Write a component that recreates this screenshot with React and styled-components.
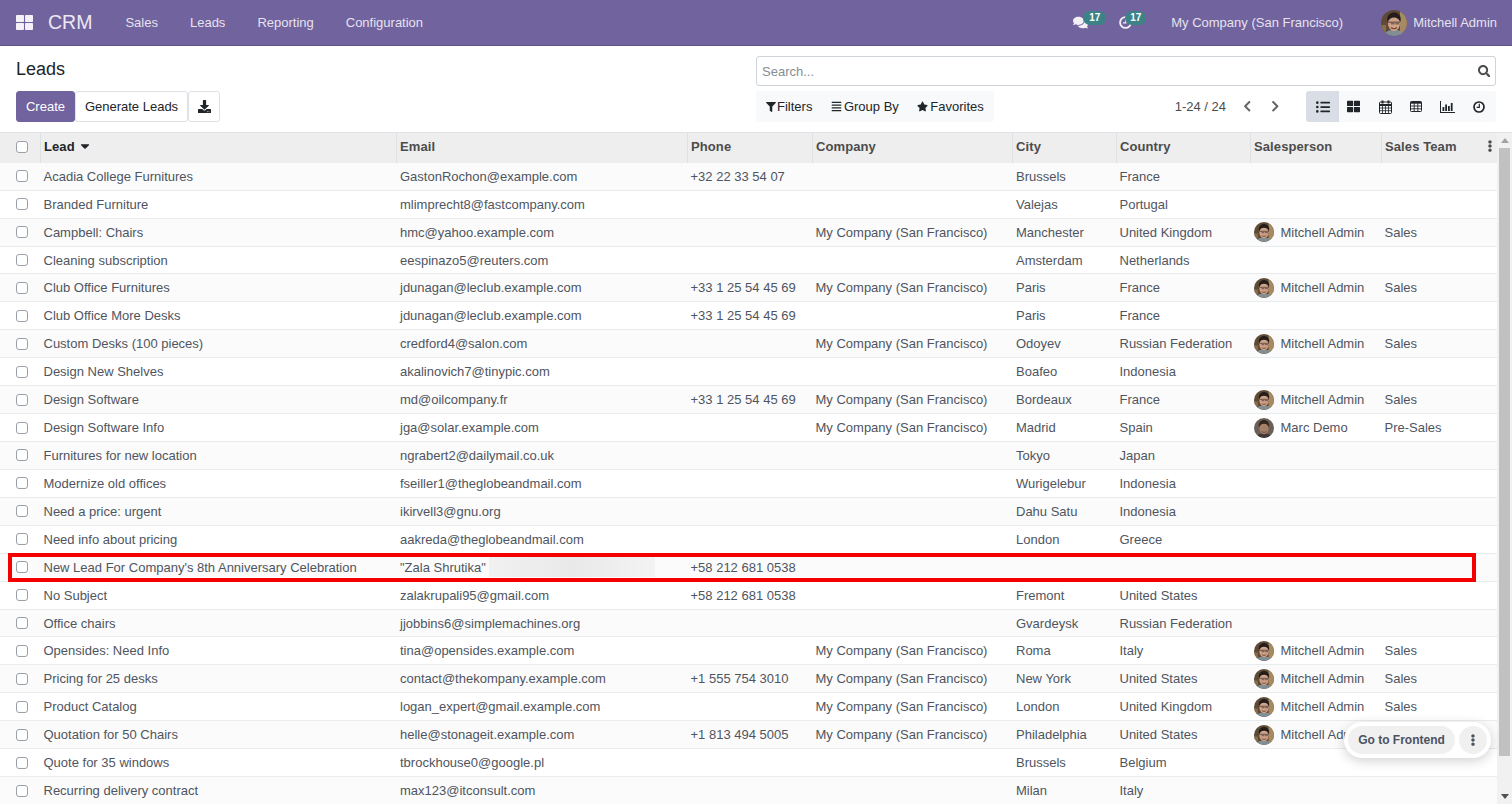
import React from 'react';
import styled, { createGlobalStyle } from 'styled-components';
import {
  FaThLarge, FaComments, FaSearch, FaDownload, FaFilter, FaAlignJustify, FaStar,
  FaChevronLeft, FaChevronRight, FaListUl, FaCaretDown, FaEllipsisV,
} from 'react-icons/fa';

const GlobalStyle = createGlobalStyle`
  html, body { margin: 0; padding: 0; height: 100%; overflow: hidden; }
  body {
    font-family: "Liberation Sans", Arial, sans-serif;
    font-size: 13px;
    color: #4c4c4c;
    background: #fff;
  }
  * { box-sizing: border-box; }
`;

const Page = styled.div`
  display: flex;
  flex-direction: column;
  height: 100vh;
  position: relative;
`;

const Navbar = styled.header`
  display: flex;
  align-items: center;
  flex: 0 0 46px;
  padding: 0 15px 0 16px;
  background: #71639e;
  border-bottom: 1px solid #5f5385;
  color: #fff;
`;

const AppsIcon = styled(FaThLarge)`
  font-size: 17px;
  margin-right: 15px;
  color: #f4f2f8;
`;

const Brand = styled.div`
  font-size: 19.5px;
  color: #ece9f2;
  margin-right: 17px;
`;

const NavItem = styled.a`
  padding: 0 16px;
  font-size: 13px;
  color: #e6e2ee;
`;

const Spacer = styled.div`
  flex: 1;
`;

const Systray = styled.div`
  position: relative;
  display: flex;
  align-items: center;
  width: ${(p) => p.$w}px;
  height: 30px;
  color: #f2f0f6;
  font-size: ${(p) => p.$size}px;
`;

const Counter = styled.span`
  position: absolute;
  left: ${(p) => p.$left}px;
  top: 3px;
  height: 14px;
  padding: 0 ${(p) => p.$pad}px;
  line-height: 13px;
  border-radius: 7px;
  background: #3d8286;
  color: #fff;
  font-size: 10px;
  font-weight: 700;
`;

const CompanyName = styled.span`
  margin-left: 25px;
  margin-right: 38px;
  color: #e6e2ee;
`;

const UserName = styled.span`
  margin-left: 6px;
  color: #e6e2ee;
`;

const ControlPanel = styled.section`
  display: grid;
  grid-template-columns: 1fr 740px;
  column-gap: 16px;
  flex: 0 0 87px;
  padding: 10px 16px 0;
  border-bottom: 1px solid #dee2e6;
`;

const LeftPanel = styled.div`
  display: flex;
  flex-direction: column;
  justify-content: space-between;
  height: 66px;
`;

const Title = styled.h1`
  margin: 2px 0 0;
  font-size: 18px;
  line-height: 22px;
  font-weight: 400;
  color: #212529;
`;

const ButtonRow = styled.div`
  display: flex;
`;

const Button = styled.button`
  display: flex;
  align-items: center;
  justify-content: center;
  height: 31px;
  width: ${(p) => p.$w}px;
  padding: 0;
  font: inherit;
  color: ${(p) => (p.$primary ? '#fff' : '#212529')};
  background: ${(p) => (p.$primary ? '#71639e' : '#fff')};
  border: 1px solid ${(p) => (p.$primary ? '#71639e' : '#dee2e6')};
  border-radius: 3px;
  svg { font-size: 13px; }
`;

const RightPanel = styled.div`
  display: flex;
  flex-direction: column;
  gap: 5px;
`;

const SearchBox = styled.div`
  display: flex;
  align-items: center;
  justify-content: space-between;
  height: 30px;
  padding: 0 5px;
  border: 1px solid #ced4da;
  border-radius: 3px;
  color: #868e96;
  svg { font-size: 12.5px; color: #4c4c4c; }
`;

const ToolsRow = styled.div`
  display: flex;
  align-items: center;
  height: 31px;
`;

const FilterBar = styled.div`
  display: flex;
  align-items: center;
  height: 31px;
  width: 238px;
  padding-left: 10px;
  gap: 18.5px;
  background: #f8f9fa;
  border-radius: 3px;
  color: #212529;
`;

const FilterItem = styled.span`
  display: flex;
  align-items: center;
  gap: ${(p) => p.$gap}px;
  svg { font-size: ${(p) => p.$icon}px; }
`;

const Pager = styled.div`
  display: flex;
  align-items: center;
  margin-left: auto;
  color: #4c4c4c;
  svg { font-size: 12.5px; color: #666; margin-left: 15px; }
`;

const ViewSwitcher = styled.div`
  display: flex;
  width: 190px;
  height: 31px;
  margin-left: 25px;
  background: #f8f9fa;
  border-radius: 3px;
`;

const ViewButton = styled.div`
  display: flex;
  align-items: center;
  justify-content: center;
  width: ${(p) => (p.$active ? 33 : 31.4)}px;
  margin-right: ${(p) => (p.$active ? -1 : 0)}px;
  font-size: ${(p) => p.$size || 14}px;
  color: #212529;
  background: ${(p) => (p.$active ? '#d9dde5' : 'transparent')};
  border-radius: 3px 0 0 3px;
`;

const ListArea = styled.div`
  display: flex;
  flex: 1;
  min-height: 0;
`;

const ListScroller = styled.div`
  position: relative;
  flex: 1;
  min-width: 0;
  overflow: hidden;
`;

const ScrollTrack = styled.div`
  display: flex;
  flex-direction: column;
  align-items: center;
  flex: 0 0 15px;
  background: #f1f1f1;
`;

const ArrowBox = styled.div`
  display: flex;
  align-items: center;
  justify-content: center;
  flex: 0 0 15px;
  width: 15px;
  &::before {
    content: '';
    border-left: 4.5px solid transparent;
    border-right: 4.5px solid transparent;
    ${(p) => (p.$down ? 'border-top: 5px solid #505050;' : 'border-bottom: 5px solid #a3a3a3;')}
  }
`;

const ScrollThumb = styled.div`
  flex: 0 0 608px;
  width: 11px;
  background: #c1c1c1;
`;

const ScrollGap = styled.div`
  flex: 1;
`;

const Table = styled.table`
  width: 100%;
  table-layout: fixed;
  border-collapse: separate;
  border-spacing: 0;
`;

const HeadCell = styled.th`
  position: relative;
  height: 29.8px;
  padding: 0 4px 3px 3px;
  text-align: left;
  font-size: 13px;
  font-weight: 700;
  letter-spacing: 0.1px;
  color: ${(p) => (p.$dark ? '#212529' : '#4c4c4c')};
  background: #eeeeef;
  border-left: ${(p) => (p.$first ? '0' : '1px solid #dee2e6')};
  svg { vertical-align: -2px; margin-left: 0; font-size: 14px; }
`;

const HeadCheck = styled(HeadCell)`
  padding-left: 16px;
  padding-bottom: 2px;
`;

const ColumnMenu = styled(FaEllipsisV)`
  position: absolute;
  right: 1px;
  top: 7px;
  color: #4c4c4c;
  && { font-size: 12px; }
`;

const Row = styled.tr`
  background: ${(p) => (p.$odd ? '#fbfbfb' : '#fff')};
`;

const Cell = styled.td`
  position: relative;
  height: 27.93px;
  padding: 0 4px 0 ${(p) => (p.$tight ? 3.5 : 4)}px;
  border-bottom: 1px solid #e9ecef;
  color: #4f5560;
  white-space: nowrap;
  overflow: hidden;
`;

const CheckCell = styled(Cell)`
  padding-left: 16px;
`;

const CheckBox = styled.span`
  display: block;
  width: 12px;
  height: 12px;
  background: #fff;
  border: 1px solid #9aa0a8;
  border-radius: 3px;
`;

const Person = styled.span`
  display: flex;
  align-items: center;
  gap: 6.5px;
`;

const BlurredMail = styled.span`
  position: absolute;
  left: 93px;
  top: 3px;
  width: 166px;
  height: 20px;
  background: linear-gradient(90deg, #f1f1f2, #e9e9ea 50%, #f3f3f4);
`;

const Highlight = styled.div`
  position: absolute;
  left: 8px;
  top: 420px;
  width: 1468px;
  height: 29px;
  border: 4px solid #f40000;
  pointer-events: none;
`;

const FrontendWidget = styled.div`
  position: absolute;
  left: 1344px;
  top: 722px;
  display: flex;
  align-items: center;
  gap: 4px;
  padding: 4px;
  background: #fff;
  border-radius: 18px;
  box-shadow: 0 3px 12px rgba(0, 0, 0, 0.18);
`;

const FrontendButton = styled.div`
  display: flex;
  align-items: center;
  justify-content: center;
  width: 107px;
  height: 28px;
  border-radius: 14px;
  background: #f0f0f0;
  color: #4b5260;
  font-size: 12px;
  font-weight: 700;
`;

const MoreButton = styled.div`
  display: flex;
  align-items: center;
  justify-content: center;
  width: 28px;
  height: 28px;
  border-radius: 50%;
  background: #f0f0f0;
  color: #4b5260;
  font-size: 12px;
`;

// the font awesome 4 look of these is not in the icon package, so drawn here
const CalendarIcon = () => (
  <svg width="13" height="14" viewBox="0 0 13 14" fill="none" stroke="currentColor">
    <rect x="0.5" y="2" width="12" height="11.5" rx="1" />
    <path d="M0.5 5h12" strokeWidth="2" />
    <path d="M3.5 0.5v3M9.5 0.5v3" strokeWidth="2" />
    <path d="M0.5 8h12M0.5 10.7h12M3.5 5v8M6.5 5v8M9.5 5v8" strokeWidth="0.8" />
  </svg>
);

const TableIcon = () => (
  <svg width="12" height="11" viewBox="0 0 12 11" fill="none" stroke="currentColor">
    <rect x="0.5" y="0.5" width="11" height="10" rx="0.8" />
    <path d="M0.5 1.8h11" strokeWidth="1.8" />
    <path d="M0.5 5h11M0.5 7.8h11M4.2 2v8M7.8 2v8" strokeWidth="0.9" />
  </svg>
);

const BarsIcon = () => (
  <svg width="15" height="12" viewBox="0 0 15 12" fill="currentColor">
    <path d="M0 0h1v11h14v1H0z" />
    <rect x="2.5" y="6" width="1.8" height="4" />
    <rect x="5.2" y="3.5" width="1.8" height="6.5" />
    <rect x="8" y="5" width="1.8" height="5" />
    <rect x="10.8" y="2" width="1.8" height="8" />
  </svg>
);

const ClockIcon = ({ size = 12 }) => (
  <svg width={size} height={size} viewBox="0 0 12 12" fill="none" stroke="currentColor">
    <circle cx="6" cy="6" r="5" strokeWidth="1.7" />
    <path d="M6.3 2.8v3.6H3.6" strokeWidth="1.2" />
  </svg>
);

// small portrait drawn by hand, the pictures are not available here
const Avatar = ({ size = 20, demo }) => (
  <svg width={size} height={size} viewBox="0 0 26 26" style={{ flex: 'none', display: 'block' }}>
    <defs>
      <clipPath id="face-round"><circle cx="13" cy="13" r="13" /></clipPath>
    </defs>
    <g clipPath="url(#face-round)">
      <rect width="26" height="26" fill={demo ? '#6b5f58' : '#5e4a36'} />
      {!demo && <rect x="19" width="7" height="26" fill="#a58a62" />}
      {!demo && <rect y="15" width="5" height="11" fill="#8a6e4a" />}
      <path d="M3 26c1-5 5-6 10-6s9 1 10 6z" fill={demo ? '#3f3835' : '#7f8f94'} />
      <ellipse cx="13" cy="13.5" rx="6" ry="7.5" fill={demo ? '#a67f68' : '#d0a287'} />
      <path d="M6.5 12c-1.5-7 3-9.5 6.5-9.5S21 5 19.5 12c-1.5-3-3.5-4.5-6.5-4.5S8 9 6.5 12z" fill={demo ? '#33281f' : '#231e1c'} />
      {!demo && <path d="M7 11.5h12v1.6h-.9v1.5h-3.6v-1.5h-1v1.5H9.9v-1.5H7z" fill="#37302d" fillOpacity="0.55" />}
      <path d="M10 17.5c2 1.6 4 1.6 6 0" stroke="#6f4334" strokeWidth="1.1" fill="none" />
    </g>
  </svg>
);

const mitchell = { person: 'Mitchell Admin', team: 'Sales' };

const leads = [
  { name: 'Acadia College Furnitures', email: 'GastonRochon@example.com', phone: '+32 22 33 54 07', city: 'Brussels', country: 'France' },
  { name: 'Branded Furniture', email: 'mlimprecht8@fastcompany.com', city: 'Valejas', country: 'Portugal' },
  { name: 'Campbell: Chairs', email: 'hmc@yahoo.example.com', company: 'My Company (San Francisco)', city: 'Manchester', country: 'United Kingdom', ...mitchell },
  { name: 'Cleaning subscription', email: 'eespinazo5@reuters.com', city: 'Amsterdam', country: 'Netherlands' },
  { name: 'Club Office Furnitures', email: 'jdunagan@leclub.example.com', phone: '+33 1 25 54 45 69', company: 'My Company (San Francisco)', city: 'Paris', country: 'France', ...mitchell },
  { name: 'Club Office More Desks', email: 'jdunagan@leclub.example.com', phone: '+33 1 25 54 45 69', city: 'Paris', country: 'France' },
  { name: 'Custom Desks (100 pieces)', email: 'credford4@salon.com', company: 'My Company (San Francisco)', city: 'Odoyev', country: 'Russian Federation', ...mitchell },
  { name: 'Design New Shelves', email: 'akalinovich7@tinypic.com', city: 'Boafeo', country: 'Indonesia' },
  { name: 'Design Software', email: 'md@oilcompany.fr', phone: '+33 1 25 54 45 69', company: 'My Company (San Francisco)', city: 'Bordeaux', country: 'France', ...mitchell },
  { name: 'Design Software Info', email: 'jga@solar.example.com', company: 'My Company (San Francisco)', city: 'Madrid', country: 'Spain', person: 'Marc Demo', team: 'Pre-Sales', demo: true },
  { name: 'Furnitures for new location', email: 'ngrabert2@dailymail.co.uk', city: 'Tokyo', country: 'Japan' },
  { name: 'Modernize old offices', email: 'fseiller1@theglobeandmail.com', city: 'Wurigelebur', country: 'Indonesia' },
  { name: 'Need a price: urgent', email: 'ikirvell3@gnu.org', city: 'Dahu Satu', country: 'Indonesia' },
  { name: 'Need info about pricing', email: 'aakreda@theglobeandmail.com', city: 'London', country: 'Greece' },
  { name: "New Lead For Company's 8th Anniversary Celebration", email: '"Zala Shrutika"', phone: '+58 212 681 0538', blurred: true },
  { name: 'No Subject', email: 'zalakrupali95@gmail.com', phone: '+58 212 681 0538', city: 'Fremont', country: 'United States' },
  { name: 'Office chairs', email: 'jjobbins6@simplemachines.org', city: 'Gvardeysk', country: 'Russian Federation' },
  { name: 'Opensides: Need Info', email: 'tina@opensides.example.com', company: 'My Company (San Francisco)', city: 'Roma', country: 'Italy', ...mitchell },
  { name: 'Pricing for 25 desks', email: 'contact@thekompany.example.com', phone: '+1 555 754 3010', company: 'My Company (San Francisco)', city: 'New York', country: 'United States', ...mitchell },
  { name: 'Product Catalog', email: 'logan_expert@gmail.example.com', company: 'My Company (San Francisco)', city: 'London', country: 'United Kingdom', ...mitchell },
  { name: 'Quotation for 50 Chairs', email: 'helle@stonageit.example.com', phone: '+1 813 494 5005', company: 'My Company (San Francisco)', city: 'Philadelphia', country: 'United States', ...mitchell },
  { name: 'Quote for 35 windows', email: 'tbrockhouse0@google.pl', city: 'Brussels', country: 'Belgium' },
  { name: 'Recurring delivery contract', email: 'max123@itconsult.com', city: 'Milan', country: 'Italy' },
  { name: 'Year-end discount', email: 'sales@example.com', city: 'Lyon', country: 'France' },
];

const columns = [
  { label: 'Email', width: 291 },
  { label: 'Phone', width: 125 },
  { label: 'Company', width: 200 },
  { label: 'City', width: 104 },
  { label: 'Country', width: 134 },
  { label: 'Salesperson', width: 131 },
];

const App = () => (
  <Page>
    <GlobalStyle />
    <Navbar>
      <AppsIcon />
      <Brand>CRM</Brand>
      <NavItem>Sales</NavItem>
      <NavItem>Leads</NavItem>
      <NavItem>Reporting</NavItem>
      <NavItem>Configuration</NavItem>
      <Spacer />
      <Systray $w={46} $size={15}>
        <FaComments />
        <Counter $left={10} $pad={6}>17</Counter>
      </Systray>
      <Systray $w={27} $size={13}>
        <ClockIcon size={13} />
        <Counter $left={6} $pad={5}>17</Counter>
      </Systray>
      <CompanyName>My Company (San Francisco)</CompanyName>
      <Avatar size={26} />
      <UserName>Mitchell Admin</UserName>
    </Navbar>

    <ControlPanel>
      <LeftPanel>
        <Title>Leads</Title>
        <ButtonRow>
          <Button $primary $w={59}>Create</Button>
          <Button $w={113}>Generate Leads</Button>
          <Button $w={32}><FaDownload /></Button>
        </ButtonRow>
      </LeftPanel>
      <RightPanel>
        <SearchBox>Search...<FaSearch /></SearchBox>
        <ToolsRow>
          <FilterBar>
            <FilterItem $gap={1} $icon={10}><FaFilter />Filters</FilterItem>
            <FilterItem $gap={2} $icon={11}><FaAlignJustify />Group By</FilterItem>
            <FilterItem $gap={2} $icon={11}><FaStar />Favorites</FilterItem>
          </FilterBar>
          <Pager>
            1-24 / 24
            <FaChevronLeft />
            <FaChevronRight />
          </Pager>
          <ViewSwitcher>
            <ViewButton $active><FaListUl /></ViewButton>
            <ViewButton $size={13}><FaThLarge /></ViewButton>
            <ViewButton><CalendarIcon /></ViewButton>
            <ViewButton><TableIcon /></ViewButton>
            <ViewButton><BarsIcon /></ViewButton>
            <ViewButton><ClockIcon /></ViewButton>
          </ViewSwitcher>
        </ToolsRow>
      </RightPanel>
    </ControlPanel>

    <ListArea>
      <ListScroller>
        <Table>
          <colgroup>
            <col style={{ width: 40 }} />
            <col style={{ width: 356 }} />
            {columns.map((c) => <col key={c.label} style={{ width: c.width }} />)}
            <col />
          </colgroup>
          <thead>
            <tr>
              <HeadCheck $first><CheckBox /></HeadCheck>
              <HeadCell $dark>Lead <FaCaretDown /></HeadCell>
              {columns.map((c) => <HeadCell key={c.label}>{c.label}</HeadCell>)}
              <HeadCell>Sales Team<ColumnMenu /></HeadCell>
            </tr>
          </thead>
          <tbody>
            {leads.map((l, i) => (
              <Row key={l.name} $odd={i % 2 === 0}>
                <CheckCell><CheckBox /></CheckCell>
                <Cell $tight>{l.name}</Cell>
                <Cell>{l.email}{l.blurred && <BlurredMail />}</Cell>
                <Cell $tight>{l.phone}</Cell>
                <Cell $tight>{l.company}</Cell>
                <Cell>{l.city}</Cell>
                <Cell $tight>{l.country}</Cell>
                <Cell>
                  {l.person && <Person><Avatar demo={l.demo} />{l.person}</Person>}
                </Cell>
                <Cell $tight>{l.team}</Cell>
              </Row>
            ))}
          </tbody>
        </Table>
        <Highlight />
      </ListScroller>
      <ScrollTrack>
        <ArrowBox />
        <ScrollThumb />
        <ScrollGap />
        <ArrowBox $down />
      </ScrollTrack>
    </ListArea>

    <FrontendWidget>
      <FrontendButton>Go to Frontend</FrontendButton>
      <MoreButton><FaEllipsisV /></MoreButton>
    </FrontendWidget>
  </Page>
);

export default App;
